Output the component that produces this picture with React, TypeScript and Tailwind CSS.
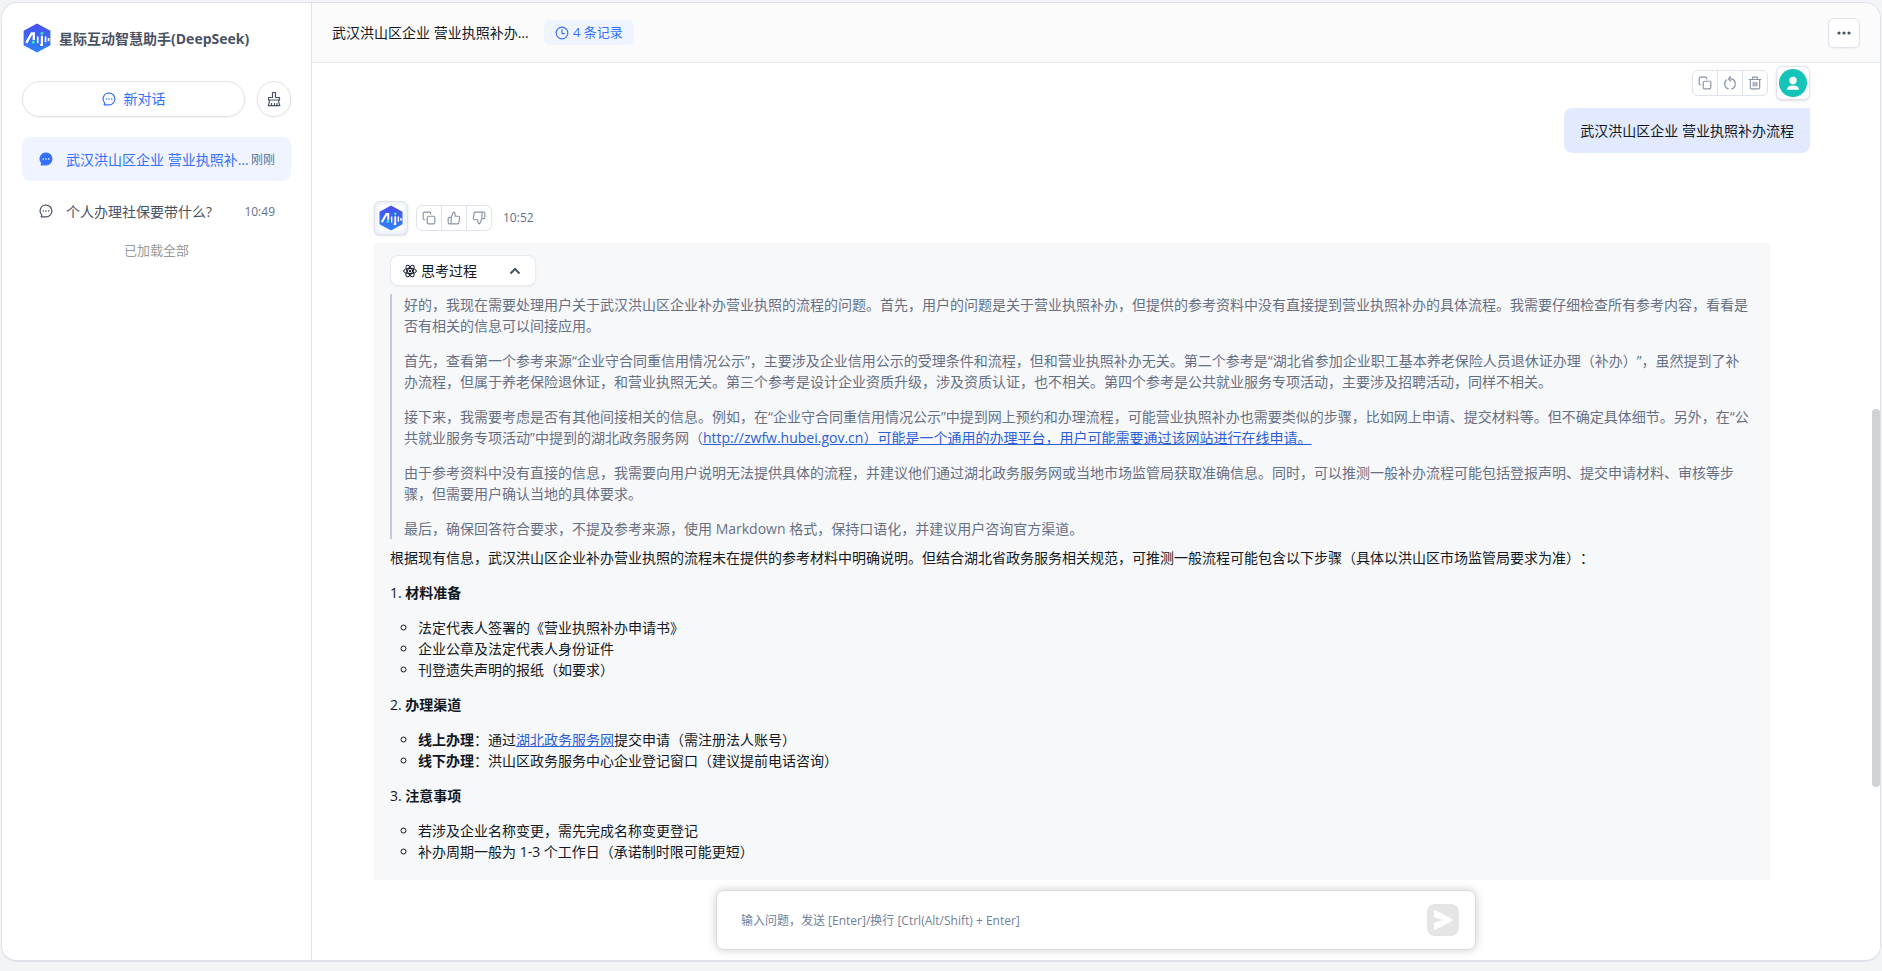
import type { ReactNode } from 'react';

const font = "font-['Open_Sans','Noto_Sans_CJK_SC',sans-serif]";

function Logo({ className }: { className: string }) {
  return (
    <svg viewBox="0 0 26 28" className={className} aria-hidden="true">
      <defs>
        <linearGradient id="hex" x1="0" y1="0" x2="0" y2="1">
          <stop offset="0" stopColor="#4a4df0" />
          <stop offset="1" stopColor="#2e83fb" />
        </linearGradient>
      </defs>
      <path d="M13 0.5 25.5 7.3v13.4L13 27.5 0.5 20.7V7.3z" fill="url(#hex)" />
      <path d="M3 18.500 8 9.800h2v6" fill="none" stroke="#fff" strokeWidth="2.200" />
      <circle cx="9.600" cy="17.800" r="1.500" fill="#3ee6b5" />
      <path d="M13.700 12.500v6.500M21 12.500v5.500M23.800 14v3" stroke="#fff" strokeWidth="1.500" />
      <path d="M17.600 12v8.500h-1.600" fill="none" stroke="#fff" strokeWidth="2" />
      <circle cx="17.600" cy="9.500" r="1.400" fill="#3ee6b5" />
    </svg>
  );
}

function ChatIcon({ filled = false }: { filled?: boolean }) {
  return (
    <svg viewBox="0 0 14 14" className="size-[14px] shrink-0" aria-hidden="true">
      <path
        d="M7 1a5.900 5.900 0 1 1 0 11.800H2.200l.7-1.700A5.900 5.900 0 0 1 7 1z"
        fill={filled ? 'currentColor' : 'none'}
        stroke="currentColor"
        strokeWidth="1.200"
        strokeLinejoin="round"
      />
      <g fill={filled ? '#fff' : 'currentColor'}>
        <circle cx="4.300" cy="7" r=".8" />
        <circle cx="7" cy="7" r=".8" />
        <circle cx="9.700" cy="7" r=".8" />
      </g>
    </svg>
  );
}

function LineIcon({ children, className = 'size-[14px]' }: { children: ReactNode; className?: string }) {
  return (
    <svg
      viewBox="0 0 24 24"
      fill="none"
      stroke="currentColor"
      strokeWidth="2"
      strokeLinecap="round"
      strokeLinejoin="round"
      className={className}
      aria-hidden="true"
    >
      {children}
    </svg>
  );
}

const CopyIcon = () => (
  <LineIcon>
    <rect x="9" y="9" width="13" height="13" rx="2" />
    <path d="M5 15H4a2 2 0 0 1-2-2V4a2 2 0 0 1 2-2h9a2 2 0 0 1 2 2v1" />
  </LineIcon>
);

const RetryIcon = () => (
  <LineIcon>
    <path d="M6 6.500A9 9 0 0 0 9 22M15 22A9 9 0 0 0 15 5h-4" />
    <path d="m13 1-3.500 4L13 9" />
  </LineIcon>
);

const TrashIcon = () => (
  <LineIcon>
    <path d="M2 6h20M8 6V2h8v4M4 6v14a2 2 0 0 0 2 2h12a2 2 0 0 0 2-2V6M9 11v6M12 11v6M15 11v6" />
  </LineIcon>
);

const LikeIcon = () => (
  <LineIcon>
    <path d="M14 9V5a3 3 0 0 0-3-3l-4 9v11h11.280a2 2 0 0 0 2-1.700l1.380-9a2 2 0 0 0-2-2.300zM7 22H4a2 2 0 0 1-2-2v-7a2 2 0 0 1 2-2h3" />
  </LineIcon>
);

const DislikeIcon = () => (
  <LineIcon>
    <path d="M10 15v4a3 3 0 0 0 3 3l4-9V2H5.720a2 2 0 0 0-2 1.700l-1.380 9a2 2 0 0 0 2 2.300zM17 2h3a2 2 0 0 1 2 2v7a2 2 0 0 1-2 2h-3" />
  </LineIcon>
);

type Action = { label: string; icon: ReactNode };

function ActionGroup({ actions }: { actions: Action[] }) {
  return (
    <div className="flex h-[26px] w-[76px] divide-x divide-[#dfe2ea] overflow-hidden rounded-md border border-[#dfe2ea] bg-white text-[#8a95a7]">
      {actions.map((action) => (
        <button key={action.label} aria-label={action.label} className="flex flex-1 items-center justify-center hover:text-[#3370ff]">
          {action.icon}
        </button>
      ))}
    </div>
  );
}

function Sidebar() {
  return (
    <aside className="flex w-[310px] shrink-0 flex-col border-r border-[#dfe2ea] px-5">
      <div className="flex items-center gap-2 pt-5 pl-px">
        <Logo className="h-[30px] w-7" />
        <h1 className="pt-0.5 text-sm font-bold text-[#485264]">星际互动智慧助手(DeepSeek)</h1>
      </div>

      <div className="mt-7 flex gap-3">
        <button className="flex h-9 flex-1 items-center justify-center gap-2 rounded-full border border-[#dfe2ea] text-sm text-[#3370ff] shadow-xs">
          <ChatIcon />
          新对话
        </button>
        <button aria-label="清空" className="flex h-9 w-[34px] shrink-0 items-center justify-center rounded-full border border-[#dfe2ea] text-[#485264] shadow-xs">
          <svg viewBox="0 0 14 16" className="h-4 w-[14px]" fill="none" stroke="currentColor" strokeWidth="1.200" strokeLinejoin="round" aria-hidden="true">
            <path d="M5.500 6.500v-5h3v5h4V9h-11V6.500zM2.500 9C2.500 12 2 13.500 1.200 14.600h11.600c-.8-1.600-1.100-3-1.300-5.600M4.500 14.600V12M7.500 14.600V12M10 14.600V12" />
          </svg>
        </button>
      </div>

      <nav className="mt-5 flex flex-col gap-2 text-sm">
        <a href="#current" className="flex h-11 items-center rounded-lg bg-[#f0f4ff] pr-4 pl-[17px] text-[#3370ff]">
          <ChatIcon filled />
          <span className="ml-[13px] min-w-0 flex-1 truncate pt-0.5">武汉洪山区企业 营业执照补办流程</span>
          <span className="ml-px pt-0.5 text-xs text-[#667085]">刚刚</span>
        </a>
        <a href="#social" className="flex h-11 items-center rounded-lg pr-4 pl-[17px] text-[#485264]">
          <ChatIcon />
          <span className="ml-[13px] min-w-0 flex-1 truncate pt-0.5">个人办理社保要带什么?</span>
          <span className="ml-px pt-0.5 text-xs text-[#667085]">10:49</span>
        </a>
      </nav>
      <p className="mt-[7px] text-center text-[13px] leading-5 text-[#999]">已加载全部</p>
    </aside>
  );
}

function ThinkingProcess() {
  return (
    <section>
      <button className="flex h-[31px] w-[146px] items-center rounded-lg border border-[#e8ebf0] bg-white pr-[14px] pl-3 text-sm text-[#111824] shadow-xs">
        <svg viewBox="0 0 24 24" className="mr-1 size-[14px]" fill="none" stroke="currentColor" strokeWidth="1.700" aria-hidden="true">
          <ellipse cx="12" cy="12" rx="11" ry="4.500" />
          <ellipse cx="12" cy="12" rx="11" ry="4.500" transform="rotate(60 12 12)" />
          <ellipse cx="12" cy="12" rx="11" ry="4.500" transform="rotate(120 12 12)" />
          <circle cx="12" cy="12" r="1.500" fill="currentColor" />
        </svg>
        思考过程
        <svg viewBox="0 0 12 8" className="ml-auto h-2 w-3" fill="none" stroke="#485264" strokeWidth="2" aria-hidden="true">
          <path d="m1.500 6.500 4.500-4.500 4.500 4.500" />
        </svg>
      </button>
      <div className="mt-2 space-y-[14px] border-l-2 border-[#c4cbd7] pr-[3px] pl-3 text-[#667085]">
        <p>
          好的，我现在需要处理用户关于武汉洪山区企业补办营业执照的流程的问题。首先，用户的问题是关于营业执照补办，但提供的参考资料中没有直接提到营业执照补办的具体流程。我需要仔细检查所有参考内容，看看是否有相关的信息可以间接应用。
        </p>
        <p>
          首先，查看第一个参考来源“企业守合同重信用情况公示”，主要涉及企业信用公示的受理条件和流程，但和营业执照补办无关。第二个参考是“湖北省参加企业职工基本养老保险人员退休证办理（补办）”，虽然提到了补办流程，但属于养老保险退休证，和营业执照无关。第三个参考是设计企业资质升级，涉及资质认证，也不相关。第四个参考是公共就业服务专项活动，主要涉及招聘活动，同样不相关。
        </p>
        <p>
          接下来，我需要考虑是否有其他间接相关的信息。例如，在“企业守合同重信用情况公示”中提到网上预约和办理流程，可能营业执照补办也需要类似的步骤，比如网上申请、提交材料等。但不确定具体细节。另外，在“公共就业服务专项活动”中提到的湖北政务服务网（
          <a href="#zwfw" className="text-[#2b5fd9] underline">http://zwfw.hubei.gov.cn）可能是一个通用的办理平台，用户可能需要通过该网站进行在线申请。</a>
        </p>
        <p>
          由于参考资料中没有直接的信息，我需要向用户说明无法提供具体的流程，并建议他们通过湖北政务服务网或当地市场监管局获取准确信息。同时，可以推测一般补办流程可能包括登报声明、提交申请材料、审核等步骤，但需要用户确认当地的具体要求。
        </p>
        <p>最后，确保回答符合要求，不提及参考来源，使用 Markdown 格式，保持口语化，并建议用户咨询官方渠道。</p>
      </div>
    </section>
  );
}

function Step({ no, title, children }: { no: number; title: string; children: ReactNode }) {
  return (
    <div className="mt-[14px]">
      <p>
        {no}. <strong className="font-bold">{title}</strong>
      </p>
      <ul className="mt-[14px] list-[circle] pl-7">{children}</ul>
    </div>
  );
}

export default function App() {
  return (
    <div className={`h-screen bg-[#f3f4f6] px-px pt-[2px] pb-[9px] text-[#111824] [text-spacing-trim:space-all] ${font}`}>
      <div className="flex h-full overflow-hidden rounded-2xl border border-b-2 border-[#dfe2ea] bg-white">
        <Sidebar />

        <main className="flex min-w-0 flex-1 flex-col">
          <header className="flex h-[60px] shrink-0 items-center border-b border-[#e8ebf0] bg-[#fbfbfc] px-5 text-sm">
            <h2 className="max-w-[197px] truncate">武汉洪山区企业 营业执照补办流程</h2>
            <span className="ml-[15px] flex h-[25px] items-center gap-1 rounded-md bg-[#f0f4ff] px-[11px] text-[13px] text-[#3370ff]">
              <LineIcon>
                <circle cx="12" cy="12" r="10" />
                <path d="M12 6v7h4" />
              </LineIcon>
              4 条记录
            </span>
            <button aria-label="更多" className="ml-auto flex h-[30px] w-8 items-center justify-center rounded-md border border-[#dfe2ea] bg-white shadow-xs">
              <svg viewBox="0 0 14 4" className="h-1 w-[14px]" fill="#485264" aria-hidden="true">
                <circle cx="2" cy="2" r="1.600" />
                <circle cx="7" cy="2" r="1.600" />
                <circle cx="12" cy="2" r="1.600" />
              </svg>
            </button>
          </header>

          <div className="flex min-h-0 flex-1">
            <div className="flex min-w-0 flex-1 flex-col overflow-hidden px-[62px] text-sm leading-[21px]">
              <div className="flex flex-col items-end pt-[3px]">
                <div className="flex items-center gap-2">
                  <ActionGroup
                    actions={[
                      { label: '复制', icon: <CopyIcon /> },
                      { label: '重试', icon: <RetryIcon /> },
                      { label: '删除', icon: <TrashIcon /> },
                    ]}
                  />
                  <div className="flex size-[34px] items-center justify-center rounded-md border border-[#dfe2ea] bg-white shadow-sm">
                    <svg viewBox="0 0 28 28" className="size-7" aria-hidden="true">
                      <circle cx="14" cy="14" r="14" fill="#14c4b8" />
                      <circle cx="14" cy="11.500" r="3.700" fill="#fff" />
                      <path d="M8 20.800c0-3 3-4.300 6-4.300s6 1.300 6 4.300z" fill="#fff" />
                    </svg>
                  </div>
                </div>
                <p className="mt-2 rounded-lg rounded-tr-none bg-[#e1eaff] px-4 py-3">武汉洪山区企业 营业执照补办流程</p>
              </div>

              <div className="mt-12 flex items-center gap-2">
                <div className="flex size-[34px] items-center justify-center rounded-md border border-[#dfe2ea] bg-[#f0f4ff] shadow-sm">
                  <div className="flex size-[26px] items-center justify-center rounded-sm bg-white">
                    <Logo className="h-[26px] w-6" />
                  </div>
                </div>
                <ActionGroup
                  actions={[
                    { label: '复制', icon: <CopyIcon /> },
                    { label: '赞', icon: <LikeIcon /> },
                    { label: '踩', icon: <DislikeIcon /> },
                  ]}
                />
                <time className="ml-[3px] text-xs text-[#667085]">10:52</time>
              </div>

              <article className="mt-2 mr-10 bg-[#f7f8fa] px-4 pt-3 pb-[18px]">
                <ThinkingProcess />
                <p className="mt-2">
                  根据现有信息，武汉洪山区企业补办营业执照的流程未在提供的参考材料中明确说明。但结合湖北省政务服务相关规范，可推测一般流程可能包含以下步骤（具体以洪山区市场监管局要求为准）：
                </p>
                <Step no={1} title="材料准备">
                  <li>法定代表人签署的《营业执照补办申请书》</li>
                  <li>企业公章及法定代表人身份证件</li>
                  <li>刊登遗失声明的报纸（如要求）</li>
                </Step>
                <Step no={2} title="办理渠道">
                  <li>
                    <strong className="font-bold">线上办理</strong>：通过
                    <a href="#service" className="text-[#2b5fd9] underline">湖北政务服务网</a>
                    提交申请（需注册法人账号）
                  </li>
                  <li>
                    <strong className="font-bold">线下办理</strong>：洪山区政务服务中心企业登记窗口（建议提前电话咨询）
                  </li>
                </Step>
                <Step no={3} title="注意事项">
                  <li>若涉及企业名称变更，需先完成名称变更登记</li>
                  <li>补办周期一般为 1-3 个工作日（承诺制时限可能更短）</li>
                </Step>
              </article>
            </div>
            <div className="flex w-2 shrink-0 flex-col">
              <div className="mt-[346px] h-[378px] rounded-sm bg-[#cfd3d6]" />
            </div>
          </div>

          <form className="mx-auto my-[10px] flex h-[60px] w-[760px] max-w-full shrink-0 items-center rounded-lg border border-[#dcdcdc] bg-white pr-4 pl-6 shadow-[0_0_10px_rgba(0,0,0,0.2)]">
            <input
              aria-label="输入问题"
              placeholder="输入问题，发送 [Enter]/换行 [Ctrl(Alt/Shift) + Enter]"
              className="h-full min-w-0 flex-1 text-xs outline-none placeholder:text-[#718096]"
            />
            <button type="button" aria-label="发送" className="flex size-8 items-center justify-center rounded-lg bg-[#e5e5e5]">
              <svg viewBox="0 0 20 20" className="size-5" fill="#fff" aria-hidden="true">
                <path d="M1 1.200c0-1 .8-1.300 1.600-.9l16 8.500c1 .5 1 1.900 0 2.400l-16 8.500c-.8.4-1.600.1-1.600-.9v-6.300L9 10.500v-1L1 7.500z" />
              </svg>
            </button>
          </form>
        </main>
      </div>
    </div>
  );
}
